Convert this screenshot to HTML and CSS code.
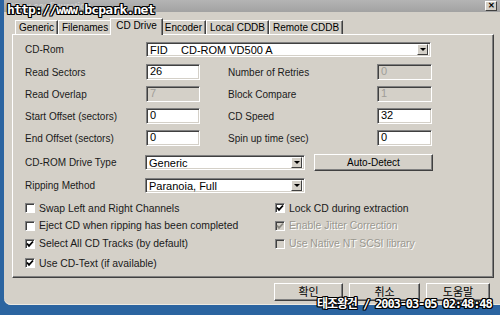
FILE: index.html
```html
<!DOCTYPE html>
<html lang="ko">
<head>
  <meta charset="UTF-8" />
  <title>CDex configuration</title>
  <link rel="stylesheet" href="styles.css">
</head>
<body>

  <div class="window">
    <div class="titlebar">
      <span class="title">CDex configuration</span>
      <span class="close">&#x2715;</span>
    </div>

    <div class="tabs">
      <span class="tab">Generic</span>
      <span class="tab">Filenames</span>
      <span class="tab active">CD Drive</span>
      <span class="tab">Encoder</span>
      <span class="tab">Local CDDB</span>
      <span class="tab">Remote CDDB</span>
    </div>

    <div class="panel">
      <div class="row row-rom">
        <label class="lbl">CD-Rom</label>
        <div class="select select-rom">
          <span class="sel-text"><span class="fid">FID</span>CD-ROM VD500 A</span>
          <span class="arrow"></span>
        </div>
      </div>

      <div class="fields">
        <label class="lbl">Read Sectors</label>
        <div class="edit">26</div>
        <span></span>
        <label class="lbl">Number of Retries</label>
        <div class="edit disabled">0</div>

        <label class="lbl">Read Overlap</label>
        <div class="edit disabled">7</div>
        <span></span>
        <label class="lbl">Block Compare</label>
        <div class="edit disabled">1</div>

        <label class="lbl">Start Offset (sectors)</label>
        <div class="edit">0</div>
        <span></span>
        <label class="lbl">CD Speed</label>
        <div class="edit">32</div>

        <label class="lbl">End Offset (sectors)</label>
        <div class="edit">0</div>
        <span></span>
        <label class="lbl">Spin up time (sec)</label>
        <div class="edit">0</div>
      </div>

      <div class="row row-drive">
        <label class="lbl lbl-wide">CD-ROM Drive Type</label>
        <div class="select select-small">
          <span class="sel-text">Generic</span>
          <span class="arrow"></span>
        </div>
        <div class="btn btn-detect">Auto-Detect</div>
      </div>

      <div class="row row-rip">
        <label class="lbl lbl-wide">Ripping Method</label>
        <div class="select select-small">
          <span class="sel-text">Paranoia, Full</span>
          <span class="arrow"></span>
        </div>
      </div>

      <div class="checks">
        <div class="check"><span class="box"></span>Swap Left and Right Channels</div>
        <div class="check"><span class="box checked"><svg viewBox="0 0 8 8"><polyline points="1,3.5 3,5.8 7,1.5" /></svg></span>Lock CD during extraction</div>

        <div class="check"><span class="box"></span>Eject CD when ripping has been completed</div>
        <div class="check off"><span class="box checked"><svg viewBox="0 0 8 8"><polyline points="1,3.5 3,5.8 7,1.5" /></svg></span>Enable Jitter Correction</div>

        <div class="check"><span class="box checked"><svg viewBox="0 0 8 8"><polyline points="1,3.5 3,5.8 7,1.5" /></svg></span>Select All CD Tracks (by default)</div>
        <div class="check off"><span class="box"></span>Use Native NT SCSI library</div>

        <div class="check"><span class="box checked"><svg viewBox="0 0 8 8"><polyline points="1,3.5 3,5.8 7,1.5" /></svg></span>Use CD-Text (if available)</div>
      </div>
    </div>

    <div class="buttons">
      <div class="btn btn-ok">확인</div>
      <div class="btn btn-cancel">취소</div>
      <div class="btn btn-help">도움말</div>
    </div>
  </div>

  <div class="stamp stamp-url">http://www.bcpark.net</div>
  <div class="stamp stamp-date">태조왕건 / 2003-03-05 02:48:48</div>

</body>
</html>
```

FILE: styles.css
```css
body {
  margin: 0;
  width: 500px;
  height: 315px;
  overflow: hidden;
  position: relative;
  background-color: #2b64a0;
  font-family: "Liberation Sans", Arial, "Noto Sans CJK KR", sans-serif;
  font-size: 10px;
  color: #000;
}

.window {
  margin-left: 4px;
  width: 496px;
  height: 305px;
  background-color: #d4d0c8;
  border-bottom-left-radius: 7px;
  box-shadow: inset 0 -1px #ece9e2;
  display: flex;
  flex-direction: column;
}

.titlebar {
  height: 12px;
  background: linear-gradient(#b4b4b4, #a2a2a2);
  display: flex;
  justify-content: space-between;
  align-items: center;
  padding: 0 3px 0 4px;
}

.title {
  color: #cdcdcd;
  font-size: 9px;
  line-height: 10px;
  font-weight: bold;
}

.close {
  width: 12px;
  height: 10px;
  box-sizing: border-box;
  background: #d4d0c8;
  border: 1px solid;
  border-color: #fff #404040 #404040 #fff;
  font-size: 8px;
  line-height: 8px;
  text-align: center;
  font-weight: bold;
}

/* tab strip */

.tabs {
  height: 22px;
  display: flex;
  align-items: flex-end;
  padding-left: 11px;
}

.tab {
  height: 13px;
  line-height: 13px;
  padding: 0 3px;
  border-top: 1px solid #fff;
  border-left: 1px solid #fff;
  border-right: 1px solid #404040;
  box-shadow: inset -1px 0 #808080;
  background: #d4d0c8;
}

.tab.active {
  height: 16px;
  line-height: 13px;
  margin: 0 -2px -1px;
  padding: 0 5px;
  position: relative;
  z-index: 1;
}

.panel {
  margin: 0 6px 0 8px;
  height: 244px;
  box-sizing: border-box;
  border: 1px solid;
  border-color: #fff #404040 #404040 #fff;
  box-shadow: inset -1px -1px #808080;
  padding: 7px 0 0 12px;
}

.row {
  display: flex;
  align-items: center;
}

.row-rom {
  height: 15px;
}

.lbl {
  width: 121px;
  white-space: nowrap;
  color: #1a1a1a;
}

.lbl-wide {
  width: 120px;
}

/* sunken edit fields and combos */

.select,
.edit {
  box-sizing: border-box;
  border: 1px solid;
  border-color: #808080 #fff #fff #808080;
  box-shadow: inset 1px 1px #404040, inset -1px -1px #d4d0c8;
  background: #fff;
}

.select {
  height: 15px;
  display: flex;
  align-items: center;
  padding: 0 2px 0 2px;
  font-size: 11px;
}

.select-rom {
  width: 285px;
}

.select-small {
  width: 160px;
}

.sel-text {
  flex: 1;
  white-space: nowrap;
  padding-left: 1px;
}

.fid {
  display: inline-block;
  width: 31px;
}

.arrow {
  width: 11px;
  height: 11px;
  box-sizing: border-box;
  background: #d4d0c8;
  border: 1px solid;
  border-color: #fff #404040 #404040 #fff;
  position: relative;
}

.arrow::after {
  content: "";
  position: absolute;
  left: 2px;
  top: 3px;
  border-left: 3px solid transparent;
  border-right: 3px solid transparent;
  border-top: 3px solid #000;
}

.fields {
  margin-top: 7px;
  display: grid;
  grid-template-columns: 121px 54px 28px 149px 55px;
  grid-auto-rows: 16px;
  row-gap: 6px;
  align-items: center;
}

.edit {
  height: 16px;
  padding: 0 3px;
  line-height: 13px;
  font-size: 11px;
}

.edit.disabled {
  background: #d4d0c8;
  color: #a09e98;
}

.row-drive {
  margin-top: 8px;
  height: 17px;
}

.row-rip {
  margin-top: 7px;
  height: 15px;
}

.btn {
  box-sizing: border-box;
  border: 1px solid;
  border-color: #fff #404040 #404040 #fff;
  box-shadow: inset -1px -1px #808080;
  background: #d4d0c8;
  text-align: center;
}

.btn-detect {
  margin-left: 9px;
  width: 119px;
  height: 17px;
  line-height: 15px;
}

/* checkboxes */

.checks {
  margin-top: 6px;
  display: grid;
  grid-template-columns: 250px 1fr;
  grid-template-rows: 18px 17px 19px 20px;
  align-items: center;
}

.check {
  display: flex;
  align-items: center;
  gap: 4px;
  white-space: nowrap;
  font-size: 10.4px;
  color: #1a1a1a;
}

.box {
  width: 10px;
  height: 10px;
  box-sizing: border-box;
  border: 1px solid;
  border-color: #808080 #fff #fff #808080;
  box-shadow: inset 1px 1px #404040;
  background: #fff;
  display: flex;
}

.box svg {
  width: 8px;
  height: 8px;
  fill: none;
  stroke: #000;
  stroke-width: 1.8;
}

.check.off {
  color: #9a9890;
  text-shadow: 1px 1px #fff;
}

.check.off .box {
  background: #d4d0c8;
}

.check.off .box svg {
  stroke: #8a8880;
}

.buttons {
  margin-top: 5px;
  display: flex;
  justify-content: flex-end;
  gap: 6px;
  padding-right: 10px;
}

.buttons .btn {
  height: 18px;
  line-height: 16px;
  font-size: 11px;
}

.btn-ok {
  width: 69px;
}

.btn-cancel {
  width: 71px;
}

.btn-help {
  width: 64px;
}

/* scan watermarks lying over the dialog */

.stamp {
  position: absolute;
  color: #fff;
  font-family: "DejaVu Sans Mono", "Noto Sans CJK KR", monospace;
  font-weight: bold;
  white-space: nowrap;
  text-shadow: 1px 0 #000, -1px 0 #000, 0 1px #000, 0 -1px #000,
    1px 1px #000, -1px -1px #000, 1px -1px #000, -1px 1px #000;
}

.stamp-url {
  left: 7px;
  top: 2px;
  font-size: 13px;
  letter-spacing: -0.8px;
}

.stamp-date {
  left: 317px;
  top: 294px;
  font-size: 12px;
  letter-spacing: -1.1px;
}
```
